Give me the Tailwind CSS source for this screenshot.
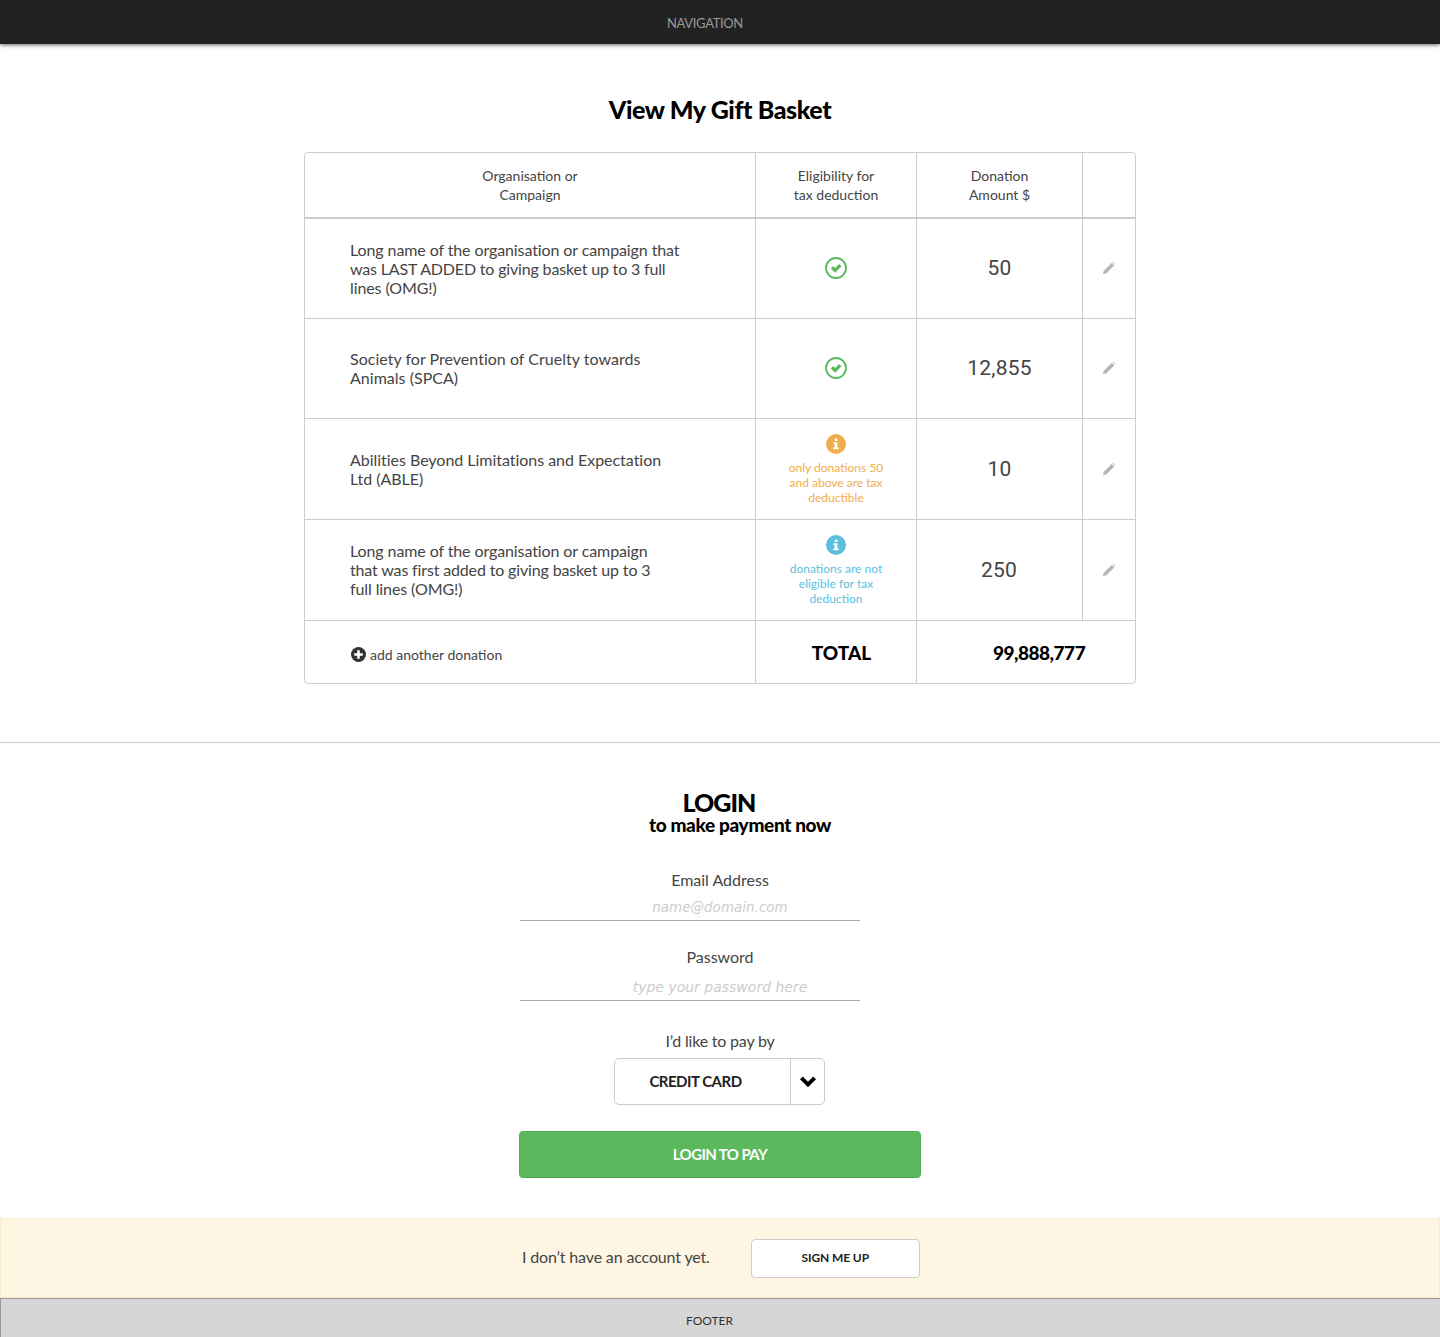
<!DOCTYPE html>
<html lang="en">
<head>
<meta charset="utf-8">
<title>View My Gift Basket</title>
<script src="https://cdn.jsdelivr.net/npm/@tailwindcss/browser@4"></script>
</head>
<body class="bg-white font-['Lato','Liberation_Sans',sans-serif] text-[#444]">
<header class="relative z-10 h-[44px] bg-[#222] shadow-[0_1px_4px_rgba(0,0,0,0.6)] pr-[30px] pt-[3px] flex items-center justify-center text-[13px] tracking-[-0.35px] text-[#999]">NAVIGATION</header>

<main>
<h1 class="pt-[49px] h-[108px] text-center text-[25px] leading-[32px] font-black tracking-[-0.4px] text-black">View My Gift Basket</h1>

<div class="mx-auto w-[832px] border border-[#ccc] rounded-[4px]">
<table class="w-[830px] table-fixed border-separate border-spacing-0">
<colgroup><col class="w-[451px]"><col class="w-[161px]"><col class="w-[166px]"><col class="w-[52px]"></colgroup>
<thead>
<tr class="h-[66px] text-[14px] leading-[19px] tracking-[0px] font-normal">
<th class="font-normal border-r border-b-2 border-[#ccc]"><div>Organisation or<br>Campaign</div></th>
<th class="font-normal border-r border-b-2 border-[#ccc]">Eligibility for<br>tax deduction</th>
<th class="font-normal border-r border-b-2 border-[#ccc]">Donation<br>Amount $</th>
<th class="border-b-2 border-[#ccc]"></th>
</tr>
</thead>
<tbody>
<tr class="h-[100px]">
<td class="border-r border-b border-[#ccc] pl-[45px] text-[16px] leading-[19px] tracking-[-0.1px]">Long name of the organisation or campaign that<br><span class="tracking-[-0.17px]">was LAST ADDED to giving basket up to 3 full</span><br>lines (OMG!)</td>
<td class="border-r border-b border-[#ccc]"><svg class="mx-auto -mt-[2px]" width="24" height="24" viewBox="0 0 24 24"><circle cx="12" cy="12" r="10" fill="none" stroke="#5cb85c" stroke-width="1.8"/><path d="M6.8 12.4l2.4-2.4 1.9 1.9 4-4 2.4 2.4-6.4 6.4z" fill="#5cb85c"/></svg></td>
<td class="border-r border-b border-[#ccc] text-center font-['Roboto',sans-serif] text-[21px] tracking-[0.2px]">50</td>
<td class="border-b border-[#ccc]"><svg class="mx-auto -mt-[2px]" width="14" height="14" viewBox="0 0 14 14"><path d="M1 13l.6-3L9.6 2l2.6 2.6-8 8zM10.4 1.3l.6-.5 2.4 2.4-.6.6z" fill="#b5b5b5"/></svg></td>
</tr>
<tr class="h-[100px]">
<td class="border-r border-b border-[#ccc] pl-[45px] pb-[2px] text-[16px] leading-[19px] tracking-[0.02px]">Society for Prevention of Cruelty towards<br>Animals (SPCA)</td>
<td class="border-r border-b border-[#ccc]"><svg class="mx-auto -mt-[2px]" width="24" height="24" viewBox="0 0 24 24"><circle cx="12" cy="12" r="10" fill="none" stroke="#5cb85c" stroke-width="1.8"/><path d="M6.8 12.4l2.4-2.4 1.9 1.9 4-4 2.4 2.4-6.4 6.4z" fill="#5cb85c"/></svg></td>
<td class="border-r border-b border-[#ccc] text-center font-['Roboto',sans-serif] text-[21px] tracking-[0.2px]">12,855</td>
<td class="border-b border-[#ccc]"><svg class="mx-auto -mt-[2px]" width="14" height="14" viewBox="0 0 14 14"><path d="M1 13l.6-3L9.6 2l2.6 2.6-8 8zM10.4 1.3l.6-.5 2.4 2.4-.6.6z" fill="#b5b5b5"/></svg></td>
</tr>
<tr class="h-[101px]">
<td class="border-r border-b border-[#ccc] pl-[45px] text-[16px] leading-[19px] tracking-[-0.03px]">Abilities Beyond Limitations and Expectation<br>Ltd (ABLE)</td>
<td class="border-r border-b border-[#ccc] text-center text-[#f0ad4e] text-[12px] leading-[15px]">
<svg class="mx-auto mb-[6px]" width="20" height="20" viewBox="0 0 20 20"><circle cx="10" cy="10" r="10" fill="#f0ad4e"/><path d="M8.8 4.5h2.6v2.4H8.8zM7.4 8.2h4v5.2h1.2v1.8H7.2v-1.8h1.4V9.9H7.4z" fill="#fff"/></svg>
<div>only donations 50<br>and above are tax<br>deductible</div></td>
<td class="border-r border-b border-[#ccc] pt-[2px] text-center font-['Roboto',sans-serif] text-[21px] tracking-[0.2px]">10</td>
<td class="border-b border-[#ccc]"><svg class="mx-auto" width="14" height="14" viewBox="0 0 14 14"><path d="M1 13l.6-3L9.6 2l2.6 2.6-8 8zM10.4 1.3l.6-.5 2.4 2.4-.6.6z" fill="#b5b5b5"/></svg></td>
</tr>
<tr class="h-[101px]">
<td class="border-r border-b border-[#ccc] pl-[45px] pb-[2px] text-[16px] leading-[19px] tracking-[-0.1px]">Long name of the organisation or campaign<br><span class="tracking-[-0.15px]">that was first added to giving basket up to 3</span><br>full lines (OMG!)</td>
<td class="border-r border-b border-[#ccc] text-center text-[#5bc0de] text-[12px] leading-[15px]">
<svg class="mx-auto mb-[6px]" width="20" height="20" viewBox="0 0 20 20"><circle cx="10" cy="10" r="10" fill="#5bc0de"/><path d="M8.8 4.5h2.6v2.4H8.8zM7.4 8.2h4v5.2h1.2v1.8H7.2v-1.8h1.4V9.9H7.4z" fill="#fff"/></svg>
<div>donations are not<br>eligible for tax<br>deduction</div></td>
<td class="border-r border-b border-[#ccc] pt-[2px] pr-px text-center font-['Roboto',sans-serif] text-[21px] tracking-[0.2px]">250</td>
<td class="border-b border-[#ccc]"><svg class="mx-auto" width="14" height="14" viewBox="0 0 14 14"><path d="M1 13l.6-3L9.6 2l2.6 2.6-8 8zM10.4 1.3l.6-.5 2.4 2.4-.6.6z" fill="#b5b5b5"/></svg></td>
</tr>
<tr class="h-[62px]">
<td class="border-r border-[#ccc] pl-[46px] text-[14px]"><div class="flex items-center gap-[4px] pt-[5px]"><svg width="15" height="15" viewBox="0 0 15 15"><circle cx="7.5" cy="7.5" r="7.5" fill="#333"/><path d="M6.2 3.2h2.6v3h3v2.6h-3v3H6.2v-3h-3V6.2h3z" fill="#fff"/></svg><span>add another donation</span></div></td>
<td class="border-r border-[#ccc] pl-[11px] pt-[2px] text-center text-[19px] font-black text-black">TOTAL</td>
<td colspan="2" class="pl-[76px] pt-[2px] text-[19px] font-black tracking-[-0.5px] text-black">99,888,777</td>
</tr>
</tbody>
</table>
</div>

<hr class="mt-[58px] border-t border-[#ccc]">

<section class="text-center">
<div class="pt-[46px] text-black font-black">
<h2 class="pr-[2px] text-[25px] leading-[26px] tracking-[-1px]">LOGIN</h2>
<p class="pl-[40px] text-[19px] leading-[20px] tracking-[-0.35px]">to make payment now</p>
</div>

<form class="mx-auto w-[400px] mt-[35px]">
<label class="block text-[16px] leading-[20px]">Email Address</label>
<input type="text" placeholder="name@domain.com" class="block w-full h-[29px] mt-[1px] pt-[3px] text-center text-[13.5px] italic font-['DejaVu_Sans',sans-serif] outline-none placeholder:text-[#ccc]">
<div class="w-[340px] border-b border-[#aaa]"></div>

<label class="block mt-[26px] text-[16px] leading-[20px]">Password</label>
<input type="password" placeholder="type your password here" class="block w-full h-[32px] mt-[1px] pt-[5px] text-center text-[14px] italic font-['DejaVu_Sans',sans-serif] outline-none placeholder:text-[#ccc]">
<div class="w-[340px] border-b border-[#aaa]"></div>

<p class="mt-[30px] text-[16px] leading-[20px] tracking-[-0.2px]">I’d like to pay by</p>
<div class="ml-[94px] mt-[7px] flex h-[47px] w-[211px] rounded-[5px] border border-[#ccc]">
<div class="flex flex-1 items-center justify-center pr-[14px] text-[15px] font-bold tracking-[-0.5px] text-[#222]">CREDIT CARD</div>
<div class="flex w-[34px] items-center justify-center border-l border-[#ccc]"><svg width="16" height="12" viewBox="0 0 16 12"><path d="M2.8.5L8 5.7 13.2.5 16 3.3l-8 8-8-8z" fill="#000"/></svg></div>
</div>
<button type="button" class="mt-[26px] block h-[47px] w-[402px] rounded-[4px] border border-[#4cae4c] bg-[#5cb85c] text-[15px] font-bold tracking-[-0.6px] text-white -ml-px">LOGIN TO PAY</button>
</form>
</section>

<section class="mt-[40px] flex h-[80px] items-center border border-[#faebcc] bg-[#fef6e2]">
<span class="ml-[521px] pb-[2px] text-[16px] tracking-[-0.15px]">I don’t have an account yet.</span>
<button type="button" class="ml-[41px] h-[39px] w-[169px] rounded-[4px] border border-[#ccc] bg-white text-[12px] font-bold tracking-[-0.1px] text-[#222]">SIGN ME UP</button>
</section>
</main>

<footer class="flex h-[39px] items-center justify-center border-t border-l border-[#999] bg-[#d6d6d6] pr-[22px] pt-[6px] text-[12px] text-[#333]">FOOTER</footer>
</body>
</html>
